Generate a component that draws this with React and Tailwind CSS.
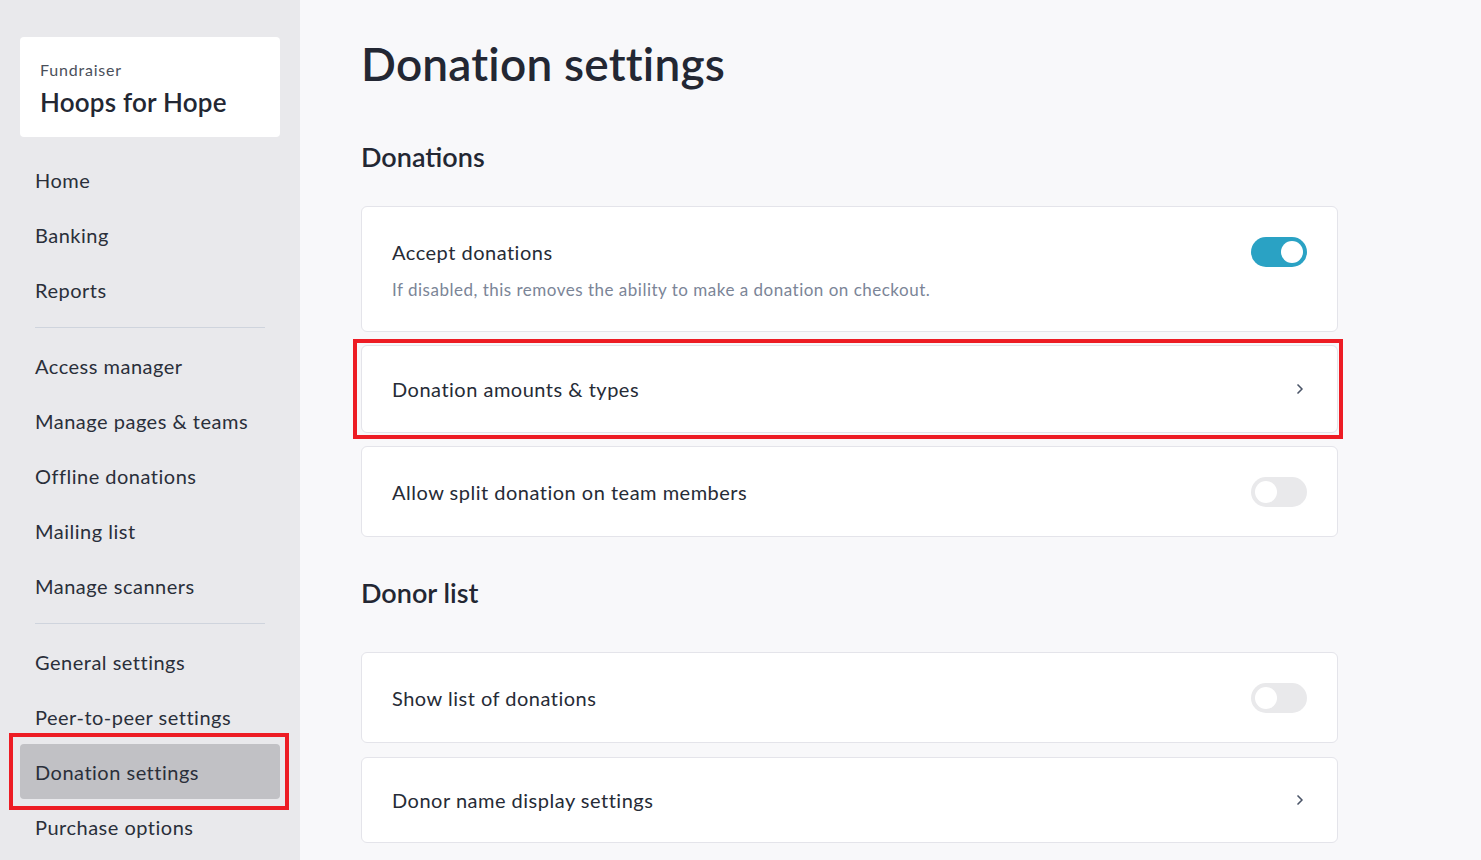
import { ChevronRight } from 'lucide-react'
import clsx from 'clsx'

const navGroups = [
  ['Home', 'Banking', 'Reports'],
  ['Access manager', 'Manage pages & teams', 'Offline donations', 'Mailing list', 'Manage scanners'],
  ['General settings', 'Peer-to-peer settings', 'Donation settings', 'Purchase options'],
]

function Toggle({ on }) {
  return (
    <div className={clsx('w-[56px] h-[30px] rounded-full flex items-center px-[4px] shrink-0', on ? 'bg-[#2aa2c4] justify-end' : 'bg-[#e9e9eb] justify-start')}>
      <div className="w-[22px] h-[22px] rounded-full bg-white" />
    </div>
  )
}

function Card({ title, sub, toggle, on, chevron, className }) {
  return (
    <div className={clsx('bg-white border border-[#e4e4ea] rounded-md flex justify-between px-[30px]', sub ? 'items-start pt-[29px]' : 'items-center', className)}>
      <div>
        <div className="text-[20px] leading-[32px] tracking-[0.5px] text-[#262b36]">{title}</div>
        {sub && <div className="text-[17px] leading-[22px] mt-[11px] tracking-[0.5px] text-[#7b8597]">{sub}</div>}
      </div>
      {toggle && <div className={sub ? 'mt-[1px]' : ''}><Toggle on={on} /></div>}
      {chevron && <ChevronRight size={16} strokeWidth={2.5} className="text-[#4b5568] mr-[-1px]" />}
    </div>
  )
}

export default function App() {
  return (
    <div className="flex min-h-[860px] font-['Lato','Liberation_Sans',sans-serif] text-[#262b36]">
      <aside className="w-[300px] shrink-0 bg-[#e9e9ec] px-[20px] pt-[37px]">
        <div className="bg-white rounded-[4px] h-[100px] px-[20px] pt-[22px]">
          <div className="text-[16px] leading-[22px] text-[#4a4f5a] tracking-[0.8px]">Fundraiser</div>
          <div className="text-[26px] leading-[32px] font-semibold mt-[5px] tracking-[0.2px] text-[#232733]">Hoops for Hope</div>
        </div>
        <nav className="mt-[15px]">
          {navGroups.map((group, gi) => (
            <div key={gi}>
              {gi > 0 && <div className="h-px bg-[#cfd4dd] mx-[15px] my-[10px]" />}
              {group.map(item => {
                const active = item === 'Donation settings'
                return (
                  <div key={item} className="relative">
                    <div className={clsx('h-[55px] flex items-center px-[15px] rounded-[4px] text-[20px] tracking-[0.5px] text-[#2a2f3a]', active && 'bg-[#c1c1c5]')}>
                      {item}
                    </div>
                    {active && <div className="absolute left-[-11px] right-[-9px] top-[-11px] bottom-[-11px] border-4 border-[#ed1c24] pointer-events-none" />}
                  </div>
                )
              })}
            </div>
          ))}
        </nav>
      </aside>

      <main className="flex-1 bg-[#f8f8fa] pl-[61px] pt-[36px] pb-[16px]">
        <div className="w-[977px]">
          <h1 className="text-[46px] leading-[56px] font-semibold tracking-[0.2px] text-[#232733]">Donation settings</h1>

          <h2 className="text-[27px] leading-[34px] font-semibold mt-[48px] text-[#232733]">Donations</h2>
          <div className="mt-[32px] flex flex-col gap-[13px]">
            <Card className="h-[126px]" title="Accept donations" sub="If disabled, this removes the ability to make a donation on checkout." toggle on />
            <div className="relative">
              <Card className="h-[88px]" title="Donation amounts & types" chevron />
              <div className="absolute left-[-8px] right-[-5px] top-[-6px] bottom-[-6px] border-4 border-[#ed1c24] pointer-events-none" />
            </div>
            <Card className="h-[91px]" title="Allow split donation on team members" toggle />
          </div>

          <h2 className="text-[27px] leading-[34px] font-semibold mt-[39px] text-[#232733]">Donor list</h2>
          <div className="mt-[42px] flex flex-col gap-[14px]">
            <Card className="h-[91px]" title="Show list of donations" toggle />
            <Card className="h-[86px]" title="Donor name display settings" chevron />
          </div>
        </div>
      </main>
    </div>
  )
}
